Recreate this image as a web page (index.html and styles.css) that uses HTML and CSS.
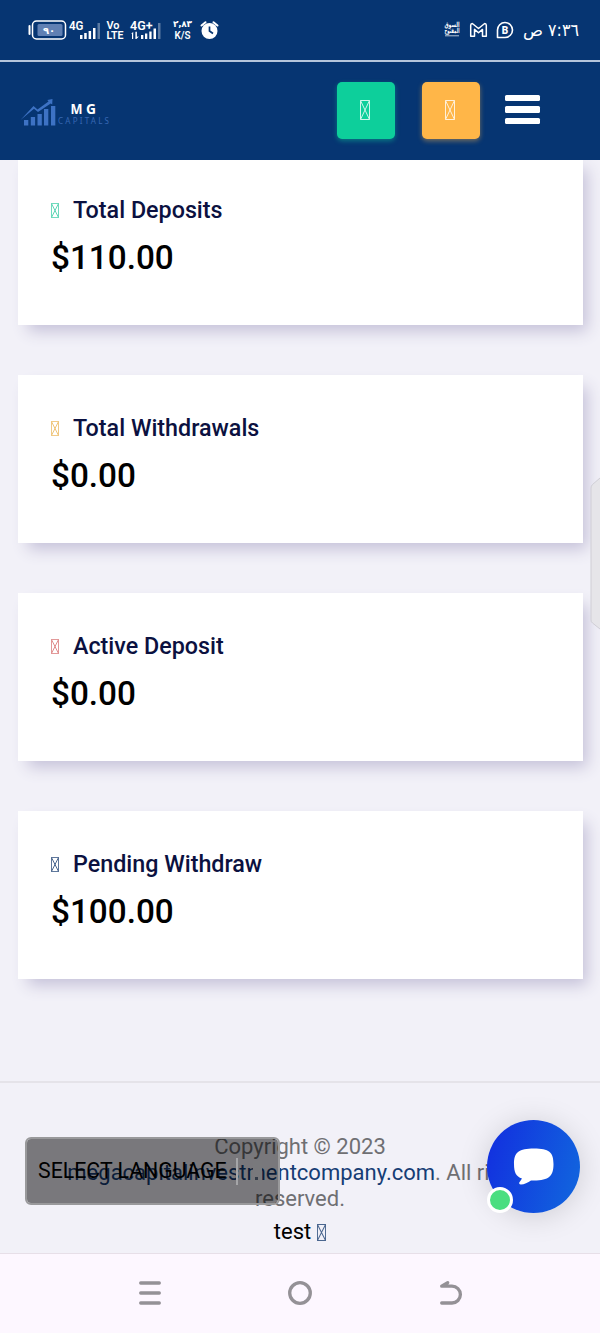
FILE: index.html
```html
<!DOCTYPE html>
<html lang="en">
<head>
<meta charset="utf-8">
<title>MG Capitals</title>
<link rel="stylesheet" href="styles.css">
</head>
<body>
<svg class="defs" width="0" height="0">
  <symbol id="glyph" viewBox="0 0 10 20" preserveAspectRatio="none"><path d="M.5.5h9v19h-9zM.5.5l9 19M9.5.5l-9 19" fill="none" stroke="currentColor" vector-effect="non-scaling-stroke"/></symbol>
</svg>
<div class="screen">
  <div class="status">
    <svg width="600" height="60" viewBox="0 0 600 60" fill="#fff">
      <rect x="32.5" y="21" width="33" height="18" rx="4" fill="none" stroke="#fff" stroke-width="1.5"/>
      <rect x="37.500" y="24" width="25" height="12" rx="1.500" fill="#6080b3"/>
      <path d="M29.500 26v8" stroke="#fff" stroke-width="2" stroke-linecap="round"/>
      <text x="49" y="33.500" class="arabic" font-size="10" font-weight="700" text-anchor="middle">٩٠</text>
      <text x="69" y="30" font-size="12" font-weight="600" textLength="14.500" lengthAdjust="spacingAndGlyphs">4G</text>
      <path d="M80 35h2.500v4H80zM84.200 33h2.500v6h-2.500zM88.600 31h2.500v8h-2.500zM93 28h2.500v11H93z"/>
      <path d="M97.500 23h2.500v16h-2.500zM158 23h2.500v16H158z" opacity=".35"/>
      <text x="106.500" y="29" font-size="11.500" font-weight="600" textLength="13" lengthAdjust="spacingAndGlyphs">Vo</text>
      <text x="106.500" y="39" font-size="11.500" font-weight="600" textLength="17" lengthAdjust="spacingAndGlyphs">LTE</text>
      <text x="130" y="30" font-size="12" font-weight="600" textLength="22.500" lengthAdjust="spacingAndGlyphs">4G+</text>
      <path d="M131.200 34l2-2.200V39H132v-5zM135.400 31.800h1.500v5l2-.3-2.500 2.500h-1zM141 35h2.300v4H141zM145 33.500h2.300V39H145zM149.300 31.500h2.300V39h-2.300zM153.500 28.500h2.500V39h-2.500z"/>
      <text x="182.500" y="27" class="arabic" font-size="9" font-weight="700" text-anchor="middle" direction="ltr" textLength="19">٢,٨٣</text>
      <text x="174.500" y="39" font-size="10" font-weight="600" textLength="16" lengthAdjust="spacingAndGlyphs">K/S</text>
      <circle cx="209.500" cy="31" r="8"/>
      <path d="M201.500 25.500l4-3.300M217.500 25.500l-4-3.300" stroke="#fff" stroke-width="2" stroke-linecap="round"/>
      <path d="M209.500 26.500V31l3.500 2.500" fill="none" stroke="#063572" stroke-width="1.700"/>
      <g class="arabic" font-weight="700" text-anchor="middle" font-size="7">
        <text x="452" y="27" textLength="15" lengthAdjust="spacingAndGlyphs">السوق</text>
        <text x="452" y="33" textLength="15" lengthAdjust="spacingAndGlyphs">المفتوح</text>
      </g>
      <path d="M445 35.300h14v1h-14z" opacity=".7"/>
      <path d="M470.700 36.200V25.300q0-1.800 1.600-1.800l6.200 5 6.200-5q1.600 0 1.600 1.800v10.900h-3.800v-6.800l-4 3.400-4-3.400v6.800z" fill="none" stroke="#fff" stroke-width="1.500" stroke-linejoin="round"/>
      <path d="M497.500 37.500V30a7.500 7.500 0 1 1 7.500 7.500z" fill="none" stroke="#fff" stroke-width="1.600" stroke-linejoin="round"/>
      <text x="505" y="33.700" font-size="10" font-weight="900" text-anchor="middle">B</text>
      <text x="579" y="36" class="arabic" font-size="17" text-anchor="end" direction="ltr" textLength="31" lengthAdjust="spacingAndGlyphs">٧:٣٦</text>
      <text x="543" y="36" class="arabic" font-size="17" text-anchor="end" direction="ltr" textLength="20" lengthAdjust="spacingAndGlyphs">ص</text>
    </svg>
  </div>
  <header class="header">
    <svg class="logo" width="94" height="34" viewBox="0 0 94 34">
      <path fill="#3d72c4" d="M3 25h4.300v5.500H3zM9.800 22h4.300v8.500H9.800zM16.500 19h4.300v11.500h-4.300zM23 14h4.300v16.500H23zM30 11h4.300v19.500H30zM-.5 25l13-14 4 3.500L27.500 6.500l-1.200-1.500L31.500 4l-.3 5.500-1.500-1L17 17l-4-3.200z"/>
      <text x="49.500" y="18.500" font-size="15" font-weight="700" fill="#fff" textLength="12" lengthAdjust="spacingAndGlyphs" class="logo-text">M</text>
      <text x="65" y="18.500" font-size="15" font-weight="700" fill="#fff" textLength="10" lengthAdjust="spacingAndGlyphs" class="logo-text">G</text>
      <text x="37" y="29" font-size="8" fill="#3767b2" textLength="51" class="logo-text">CAPITALS</text>
    </svg>
    <button class="action green"><svg width="10" height="20"><use href="#glyph"/></svg></button>
    <button class="action orange"><svg width="10" height="20"><use href="#glyph"/></svg></button>
    <div class="menu"><i></i><i></i><i></i></div>
  </header>
  <main class="cards">
    <section class="card"><h2><svg class="mint" width="8" height="15"><use href="#glyph"/></svg><span>Total Deposits</span></h2><p>$110.00</p></section>
    <section class="card"><h2><svg class="gold" width="8" height="15"><use href="#glyph"/></svg><span>Total Withdrawals</span></h2><p>$0.00</p></section>
    <section class="card"><h2><svg class="red" width="8" height="15"><use href="#glyph"/></svg><span>Active Deposit</span></h2><p>$0.00</p></section>
    <section class="card"><h2><svg class="navy" width="8" height="15"><use href="#glyph"/></svg><span>Pending Withdraw</span></h2><p>$100.00</p></section>
  </main>
  <footer class="footer">
    <p>Copyright © 2023<br><a>megacapitalinvestmentcompany.com</a>. All rights<br>reserved.</p>
    <div class="test">test <svg class="navy" width="9" height="17"><use href="#glyph"/></svg></div>
    <div class="language"><span>SELECT LANGUAGE</span><i class="divider"></i><i class="arrow"></i></div>
    <div class="chat">
      <svg width="94" height="94" viewBox="0 0 94 94"><path fill="#fff" d="M47 28.500c15 0 19.500 3.500 19.500 15.500S62 60.500 47 60.500h-3c-3 2-7 4-10 4-2 0-2.500-1.500-1-3l2-3C29 56.500 27 52.500 27 44c0-12 5-15.500 20-15.500z"/></svg>
      <i class="online"></i>
    </div>
  </footer>
  <nav class="nav">
    <svg width="600" height="79" viewBox="0 0 600 79" fill="none" stroke="#949196" stroke-width="3.300" stroke-linecap="round" stroke-linejoin="round">
      <path d="M140.700 29h18.600M140.700 39h18.600M140.700 49h18.600"/>
      <circle cx="300" cy="39" r="10.300"/>
      <path d="M441.700 49H452a8.300 8.300 0 0 0 0-16.800h-10.300l6-3.500"/>
    </svg>
  </nav>
  <div class="edge"><svg width="10" height="154" viewBox="0 0 10 154"><path d="M10 1L2.500 7.500Q1 9 1 11v132q0 2 1.500 3L10 152" fill="#e6e5e9" stroke="#cfced5"/></svg></div>
</div>
</body>
</html>
```
FILE: styles.css
```css
* { box-sizing: border-box; }
body { margin: 0; font-family: Roboto, "DejaVu Sans", sans-serif; background: #f2f1f8; }
svg { display: block; flex: none; }
.defs { position: absolute; }
.screen { position: relative; width: 600px; height: 1333px; overflow: hidden; display: flex; flex-direction: column; }
.status { height: 62px; background: #063572; border-bottom: 2px solid #b5c5dc; position: relative; z-index: 2; flex: none; }
.arabic { font-family: "DejaVu Sans", sans-serif; }
.header { height: 98px; flex: none; background: #063572; display: flex; align-items: center; padding: 0 60px 4px 21px; position: relative; z-index: 2; }
.logo { margin-top: 5px; margin-right: auto; overflow: visible; }
.logo-text { font-family: "Noto Sans", sans-serif; }
.action { width: 58.500px; height: 57px; border: 0; border-radius: 5px; padding: 0; color: #fff; display: flex; align-items: center; justify-content: center; margin-top: 2px; }
.action svg { opacity: .8; margin-top: -1px; margin-left: -1px; }
.green { background: #0dcf9b; box-shadow: 0 2px 5px #0dcf9b70; margin-right: 26.500px; }
.orange { background: #ffb648; box-shadow: 0 2px 5px #ffb64870; margin-right: 25px; }
.menu { width: 35px; display: flex; flex-direction: column; gap: 5px; margin-top: 1px; }
.menu i { height: 6.500px; border-radius: 1.500px; background: #fff; }
.cards { height: 921px; flex: none; padding: 0 17px 0 18px; margin-top: -3.500px; display: flex; flex-direction: column; gap: 50px; }
.card { height: 168px; flex: none; background: #fff; box-shadow: 7px 9px 15px -3px #c4c0d8; padding: 39px 33px 0; }
.card h2 { margin: 0; display: flex; align-items: center; gap: 14px; font-size: 23.300px; line-height: 28px; font-weight: 500; color: #0b1140; }
.card h2 svg { margin-top: 1px; }
.card p { margin: 13px 0 0; color: #000; font-size: 33.300px; line-height: 41px; font-weight: 500; }
.mint { color: #5fd6b6; }
.gold { color: #efc478; }
.red { color: #df8c8c; }
.navy { color: #4a668f; }
.footer { height: 173px; flex: none; position: relative; margin-top: 3.500px; border-top: 2px solid #e5e3e9; padding-top: 51px; text-align: center; }
.footer p { margin: 0; font-size: 22px; line-height: 26px; color: #6f6f73; white-space: nowrap; }
.footer a { color: #163d75; }
.test { display: flex; justify-content: center; align-items: center; gap: 6px; font-size: 22px; line-height: 30px; margin-top: 5px; color: #000; }
.language { position: absolute; left: 25px; top: 54px; width: 255px; height: 68px; border: 2px solid #99999b; border-radius: 6px; background: rgba(0,0,0,.5); background-clip: padding-box; color: #000; font-size: 21.300px; line-height: 63px; padding-left: 11px; text-align: left; white-space: nowrap; }
.divider { position: absolute; left: 209px; top: 19px; width: 2px; height: 27px; background: #a5a5a8; }
.arrow { position: absolute; left: 226px; top: 22px; width: 9px; height: 22px; background: #79797c; }
.arrow::after { content: ""; position: absolute; left: 2px; top: 16px; width: 3px; height: 3px; background: #333b48; }
.chat { position: absolute; left: 487px; top: 37px; width: 93px; height: 93px; border-radius: 50%; background: linear-gradient(105deg, #1233df 10%, #1162de 90%); box-shadow: 0 3px 30px rgba(0,0,0,.15); }
.online { position: absolute; left: 0; top: 67px; width: 26px; height: 26px; border-radius: 50%; border: 3px solid #fff; background: #4ade80; }
.nav { height: 79px; flex: none; background: #fdf7ff; box-shadow: 0 -1px 0 #e7dfe8; position: relative; }
.edge { position: absolute; left: 590px; top: 477px; }
```
